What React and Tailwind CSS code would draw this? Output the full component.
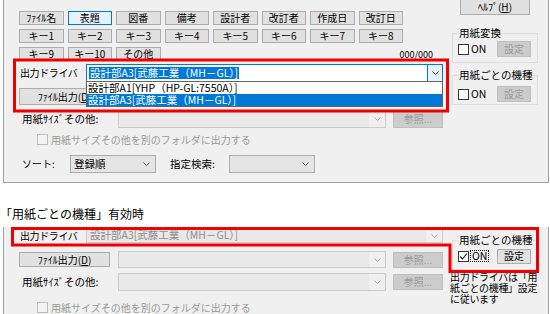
import React from "react";

function WinButton({ variant = "normal", className = "", children }) {
  const styles = {
    normal: "bg-[#e1e1e1] border-[#adadad] text-black",
    active: "bg-[#e5f1fb] border-[#0078d7] text-black",
    disabled: "bg-[#cccccc] border-[#bfbfbf] text-[#9a9a9a]",
  };
  return (
    <div
      className={`flex items-center justify-center border text-[10px] leading-none whitespace-nowrap ${styles[variant]} ${className}`}
    >
      {children}
    </div>
  );
}

function Chevron({ color = "#505050" }) {
  return (
    <svg width="7" height="4" viewBox="0 0 7 4">
      <path d="M0.5 0.5 L3.5 3.5 L6.5 0.5" fill="none" stroke={color} strokeWidth="1" />
    </svg>
  );
}

function CheckBox({ checked, disabled }) {
  return (
    <div
      className={`w-[11px] h-[11px] border flex items-center justify-center shrink-0 ${
        disabled ? "border-[#bcbcbc] bg-[#f4f4f4]" : "border-[#333333] bg-white"
      }`}
    >
      {checked && (
        <svg width="9" height="9" viewBox="0 0 9 9">
          <path d="M1 4.5 L3.5 7 L8 1.5" fill="none" stroke="#222" strokeWidth="1.1" />
        </svg>
      )}
    </div>
  );
}

function DisabledCombo({ className = "", text }) {
  return (
    <div className={`flex items-center border border-[#cccccc] bg-[#e9e9e9] ${className}`}>
      <span className="ml-[3px] text-[10.5px] leading-none text-[#8c8c8c] whitespace-nowrap">{text}</span>
      <div className="ml-auto w-[16px] h-full bg-[#f0f0f0] flex items-center justify-center">
        <Chevron color="#b0b0b0" />
      </div>
    </div>
  );
}

function Group({ title, rowClass, children }) {
  return (
    <div className="border border-[#dcdcdc] h-[30px]">
      <div className="-mt-[7px] ml-[5px] w-fit px-[1px] bg-[#f0f0f0] text-[10.5px] leading-[12px] h-[12px]">
        {title}
      </div>
      <div className={`flex items-center h-[16px] pl-[5px] pr-[6px] ${rowClass}`}>{children}</div>
    </div>
  );
}

const fields = [
  ["ﾌｧｲﾙ名", "表題", "図番", "備考", "設計者", "改訂者", "作成日", "改訂日"],
  ["キー1", "キー2", "キー3", "キー4", "キー5", "キー6", "キー7", "キー8"],
  ["キー9", "キー10", "その他"],
];

function App() {
  return (
    <div className="relative w-[550px] h-[314px] overflow-hidden bg-white flex flex-col font-['Noto_Sans_CJK_JP','Noto_Sans',sans-serif] text-black">
      {/* top: dropdown open */}
      <div className="ml-[3px] w-[546px] h-[183px] shrink-0 bg-[#f0f0f0] border-l border-r border-b border-[#a0a0a0] flex">
        <div className="w-[439px] pl-[15px] pt-[11px] flex flex-col">
          {fields.map((row, i) => (
            <div key={i} className={`flex gap-[4px] h-[14px] ${i > 0 ? "mt-[4px]" : ""}`}>
              {row.map((f) => (
                <WinButton
                  key={f}
                  variant={f === "表題" ? "active" : "normal"}
                  className="w-[44.5px] h-full"
                >
                  {f}
                </WinButton>
              ))}
              {i === 2 && (
                <span className="ml-auto mr-[10px] self-end text-[9px] leading-[10px] mb-[1px]">000/000</span>
              )}
            </div>
          ))}

          <div className="flex items-center mt-[3px] h-[18px]">
            <div className="w-[67px] pl-[1px] text-[10px] leading-none tracking-[-0.4px]">出力ドライバ</div>
            <div className="relative w-[357px] h-full border border-[#0078d7] bg-white flex items-center">
              <span className="ml-[2px] px-[1px] bg-[#0078d7] text-white text-[10.5px] leading-[12px] whitespace-nowrap">
                設計部A3[武藤工業（MH－GL）]
              </span>
              <div className="ml-auto w-[15px] h-full bg-[#e5f1fb] border-l border-[#0078d7] flex items-center justify-center">
                <Chevron color="#333" />
              </div>
              <div className="absolute left-[-1px] top-full w-[357px] border border-[#646464] bg-white z-10">
                <div className="h-[12px] pl-[1px] text-[10.5px] leading-[12px] whitespace-nowrap">
                  設計部A1[YHP（HP-GL:7550A）]
                </div>
                <div className="h-[12px] pl-[1px] bg-[#0078d7] text-white text-[10.5px] leading-[12px] whitespace-nowrap">
                  設計部A3[武藤工業（MH－GL）]
                </div>
              </div>
            </div>
          </div>

          <div className="flex items-center mt-[6px] h-[17px]">
            <WinButton className="w-[91px] h-full">
              ﾌｧｲﾙ出力(<u>D</u>)
            </WinButton>
            <DisabledCombo className="ml-[8px] w-[268px] h-[18px]" />
            <WinButton variant="disabled" className="ml-[7px] w-[50px] h-[18px]">
              参照...
            </WinButton>
          </div>

          <div className="flex items-center mt-[5px] h-[18px]">
            <div className="w-[99px] pl-[3px] text-[10.5px] leading-none">用紙ｻｲｽﾞその他:</div>
            <DisabledCombo className="w-[268px] h-full" />
            <WinButton variant="disabled" className="ml-[7px] w-[50px] h-full">
              参照...
            </WinButton>
          </div>

          <div className="flex items-center mt-[6px] h-[11px] pl-[18px] gap-[3px]">
            <CheckBox disabled />
            <span className="text-[10px] leading-none text-[#9a9a9a]">用紙サイズその他を別のフォルダに出力する</span>
          </div>

          <div className="flex items-center mt-[10px] h-[18px]">
            <div className="w-[51px] pl-[3px] text-[10px] leading-none">ソート:</div>
            <div className="w-[86px] h-full border border-[#adadad] bg-[#e5e5e5] flex items-center pl-[3px] pr-[5px]">
              <span className="text-[10.5px] leading-none">登録順</span>
              <span className="ml-auto">
                <Chevron />
              </span>
            </div>
            <div className="ml-[14px] w-[59px] text-[10.5px] leading-none">指定検索:</div>
            <div className="w-[86px] h-full border border-[#adadad] bg-[#e5e5e5] flex items-center justify-end pr-[5px]">
              <Chevron />
            </div>
          </div>
        </div>

        <div className="ml-[9px] w-[86px] flex flex-col">
          <WinButton className="-mt-[2px] ml-[8px] w-[70px] h-[17px]">
            ﾍﾙﾌﾟ(<u>H</u>)
          </WinButton>
          <div className="mt-[18px]">
            <Group title="用紙変換" rowClass="mt-[2px]">
              <CheckBox />
              <span className="ml-[2px] text-[10.5px] leading-none">ON</span>
              <WinButton variant="disabled" className="ml-auto w-[34px] h-full">
                設定
              </WinButton>
            </Group>
          </div>
          <div className="mt-[12px]">
            <Group title="用紙ごとの機種" rowClass="mt-[5px]">
              <CheckBox />
              <span className="ml-[2px] text-[10.5px] leading-none">ON</span>
              <WinButton variant="disabled" className="ml-auto w-[34px] h-full">
                設定
              </WinButton>
            </Group>
          </div>
        </div>
      </div>

      {/* caption */}
      <div className="mt-[23px] h-[16px] text-[12px] leading-[16px] whitespace-nowrap">
        「用紙ごとの機種」有効時
      </div>

      {/* bottom: per-paper model enabled */}
      <div className="mt-[5px] ml-[3px] w-[546px] flex-1 bg-[#f0f0f0] border-l border-r border-[#a0a0a0] flex">
        <div className="w-[439px] pl-[15px] flex flex-col">
          <div className="flex items-center mt-[1px] h-[15px]">
            <div className="w-[67px] pl-[1px] text-[10px] leading-none tracking-[-0.4px]">出力ドライバ</div>
            <DisabledCombo className="w-[357px] h-full" text="設計部A3[武藤工業（MH－GL）]" />
          </div>

          <div className="flex items-center mt-[8px] h-[17px]">
            <WinButton className="w-[91px] h-[15px]">
              ﾌｧｲﾙ出力(<u>D</u>)
            </WinButton>
            <DisabledCombo className="ml-[8px] w-[268px] h-full" />
            <WinButton variant="disabled" className="ml-[7px] w-[50px] h-[16px]">
              参照...
            </WinButton>
          </div>

          <div className="flex items-center mt-[5px] h-[18px]">
            <div className="w-[99px] pl-[3px] text-[10.5px] leading-none">用紙ｻｲｽﾞその他:</div>
            <DisabledCombo className="w-[268px] h-full" />
            <WinButton variant="disabled" className="ml-[7px] w-[50px] h-[16px]">
              参照...
            </WinButton>
          </div>

          <div className="flex items-center mt-[11px] h-[11px] pl-[18px] gap-[3px]">
            <CheckBox disabled />
            <span className="text-[10px] leading-none text-[#9a9a9a]">用紙サイズその他を別のフォルダに出力する</span>
          </div>
        </div>

        <div className="ml-[7px] w-[90px] flex flex-col">
          <div className="ml-[2px] w-[86px] mt-[13px]">
            <Group title="用紙ごとの機種" rowClass="mt-[2px]">
              <CheckBox checked />
              <span className="ml-[1px] px-[1px] border border-dotted border-black text-[10.5px] leading-[10px]">ON</span>
              <WinButton className="ml-auto w-[34px] h-[15px]">設定</WinButton>
            </Group>
          </div>
          <div className="mt-[1px] text-[10px] leading-[11px] tracking-[-0.3px] whitespace-nowrap">
            出力ドライバは「用
            <br />
            紙ごとの機種」設定
            <br />
            に従います
          </div>
        </div>
      </div>

      {/* red callouts */}
      <svg className="absolute inset-0 pointer-events-none" width="550" height="314">
        <rect x="14.5" y="60" width="433" height="51" fill="none" stroke="#f00000" strokeWidth="3" />
        <path
          d="M12.5 228.5 H537.5 V271.5 H450 V245 H12.5 Z"
          fill="none"
          stroke="#f00000"
          strokeWidth="3"
        />
      </svg>
    </div>
  );
}

export default App;
